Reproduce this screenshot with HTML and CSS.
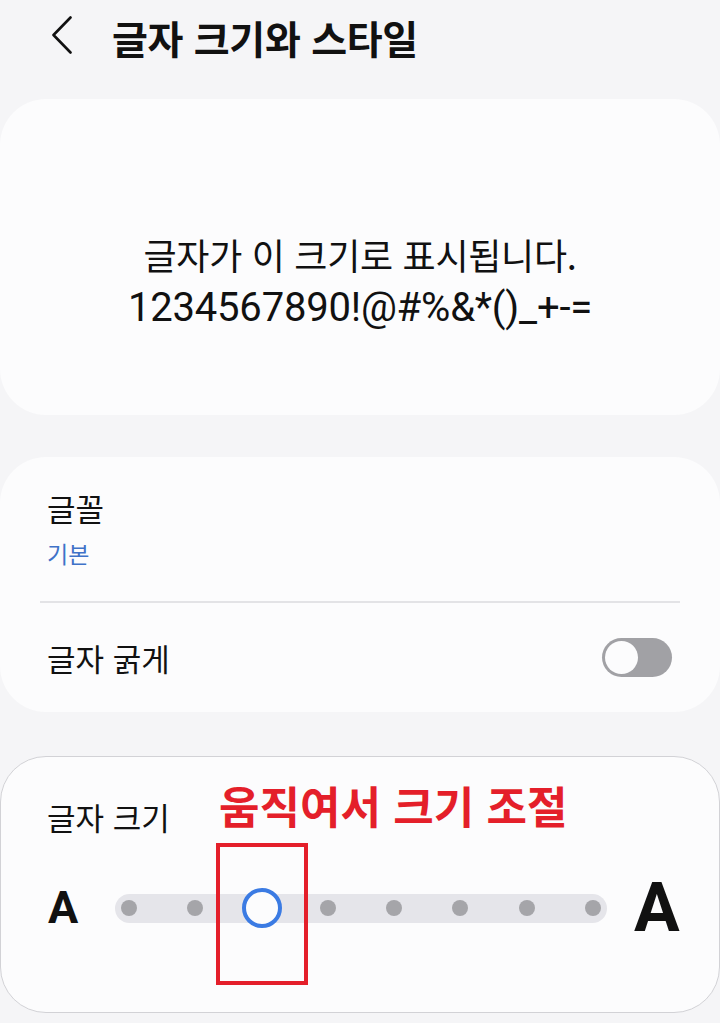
FILE: index.html
```html
<!DOCTYPE html>
<html lang="ko">
<head>
<meta charset="utf-8">
<title>글자 크기와 스타일</title>
<link rel="stylesheet" href="styles.css">
</head>
<body>
<header class="appbar">
  <svg class="back" width="22" height="38" viewBox="0 0 22 38" aria-hidden="true">
    <path d="M19.5 1.5 L2.5 19 L19.5 36.5" fill="none" stroke="#111" stroke-width="2.6" stroke-linecap="round" stroke-linejoin="round"/>
  </svg>
  <h1 class="title">글자 크기와 스타일</h1>
</header>

<section class="card preview">
  <div class="preview-ko">글자가 이 크기로 표시됩니다.</div>
  <div class="preview-en">1234567890!@#%&amp;*()_+-=</div>
</section>

<section class="card options">
  <div class="opt-font">
    <div class="opt-title">글꼴</div>
    <div class="opt-sub">기본</div>
  </div>
  <div class="divider"></div>
  <div class="opt-row">
    <div class="opt-title">글자 굵게</div>
    <div class="switch"><div class="knob"></div></div>
  </div>
</section>

<section class="card size">
  <div class="size-label">글자 크기</div>
  <div class="slider-row">
    <span class="a-small">A</span>
    <div class="track">
      <span class="dot"></span>
      <span class="dot"></span>
      <span class="slot"><span class="thumb"></span></span>
      <span class="dot"></span>
      <span class="dot"></span>
      <span class="dot"></span>
      <span class="dot"></span>
      <span class="dot"></span>
    </div>
    <span class="a-big">A</span>
  </div>
  <div class="note">움직여서 크기 조절</div>
  <div class="note-box"></div>
</section>
</body>
</html>
```

FILE: styles.css
```css
html, body {
  margin: 0;
  padding: 0;
}
body {
  width: 720px;
  height: 1023px;
  overflow: hidden;
  background: #f5f5f7;
  font-family: "Noto Sans CJK KR", "Noto Sans", sans-serif;
  color: #111;
}

.appbar {
  display: flex;
  align-items: flex-start;
  height: 99px;
  box-sizing: border-box;
  padding: 12px 0 0 51px;
}
.back {
  display: block;
  margin-top: 4px;
  flex: none;
}
.title {
  margin: 0 0 0 39px;
  font-size: 39px;
  line-height: 50px;
  font-weight: 700;
  color: #111;
  letter-spacing: -0.3px;
}

.card {
  background: #fcfcfd;
  border-radius: 46px;
  width: 720px;
  box-sizing: border-box;
}

.preview {
  height: 316px;
  padding-top: 124px;
  text-align: center;
}
.preview-ko {
  font-size: 36px;
  line-height: 62px;
  font-weight: 400;
  letter-spacing: -0.3px;
}
.preview-en {
  font-family: Roboto, "Noto Sans", sans-serif;
  font-size: 40px;
  line-height: 46px;
  font-weight: 400;
  letter-spacing: -0.2px;
}

.options {
  margin-top: 42px;
  height: 255px;
}
.opt-font {
  padding: 31px 47px 0;
  height: 144px;
  box-sizing: border-box;
}
.opt-title {
  font-size: 31px;
  line-height: 40px;
}
.opt-sub {
  margin-top: 10px;
  font-size: 23px;
  line-height: 30px;
  color: #3f72c8;
}
.divider {
  height: 2px;
  margin: 0 40px;
  background: #e3e3e6;
}
.opt-row {
  display: flex;
  align-items: center;
  justify-content: space-between;
  height: 109px;
  padding: 0 48px 0 47px;
}
.switch {
  width: 70px;
  height: 39px;
  border-radius: 20px;
  background: #a1a1a5;
  box-sizing: border-box;
  padding: 3px;
  display: flex;
  align-items: center;
}
.knob {
  width: 33px;
  height: 33px;
  border-radius: 50%;
  background: #fcfcfd;
}

.size {
  position: relative;
  margin-top: 44px;
  height: 257px;
  border: 1px solid #d2d2d6;
  padding-top: 40px;
}
.size-label {
  padding-left: 46px;
  font-size: 31px;
  line-height: 40px;
}
.slider-row {
  display: flex;
  align-items: center;
  height: 60px;
  margin-top: 41px;
  padding-left: 47px;
}
.a-small {
  width: 67px;
  font-family: Roboto, "Noto Sans", sans-serif;
  font-weight: 700;
  font-size: 45px;
  line-height: 60px;
}
.a-big {
  margin-left: 27px;
  font-family: Roboto, "Noto Sans", sans-serif;
  font-weight: 700;
  font-size: 68px;
  line-height: 60px;
}
.track {
  width: 492px;
  height: 29px;
  border-radius: 15px;
  background: #e5e5ea;
  box-sizing: border-box;
  padding: 0 6px;
  display: flex;
  align-items: center;
  justify-content: space-between;
}
.dot {
  width: 16px;
  height: 16px;
  border-radius: 50%;
  background: #a5a5a9;
}
.slot {
  width: 16px;
  height: 16px;
  display: flex;
  align-items: center;
  justify-content: center;
}
.thumb {
  flex: none;
  width: 40px;
  height: 40px;
  border-radius: 50%;
  border: 4px solid #3b7be3;
  background: #fcfcfd;
  box-sizing: border-box;
}

.note {
  position: absolute;
  top: 26px;
  left: 218px;
  font-size: 44px;
  line-height: 44px;
  font-weight: 700;
  color: #e41f2a;
  letter-spacing: 0;
  white-space: nowrap;
}
.note-box {
  position: absolute;
  top: 86px;
  left: 215px;
  width: 92px;
  height: 142px;
  border: 4px solid #e41f2a;
  box-sizing: border-box;
}
```
